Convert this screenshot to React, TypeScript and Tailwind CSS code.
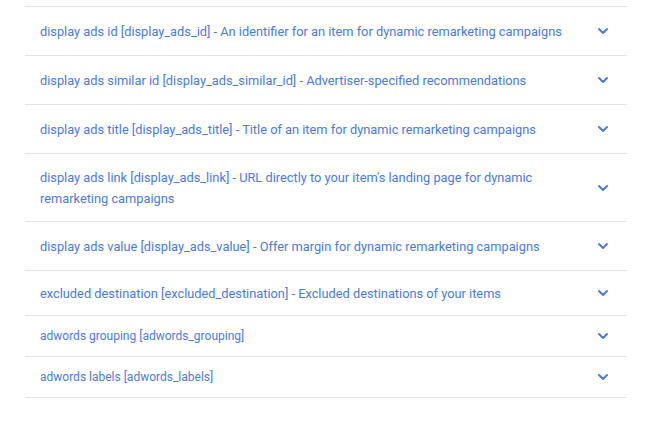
import { useState } from 'react';

type Row = {
  label: string;
  pad: string;
  size: string;
};

const ROWS: Row[] = [
  {
    label: 'display ads id [display_ads_id] - An identifier for an item for dynamic remarketing campaigns',
    pad: 'py-[13.5px] leading-[21px]',
    size: 'text-[12.8px]',
  },
  {
    label: 'display ads similar id [display_ads_similar_id] - Advertiser-specified recommendations',
    pad: 'py-[13.5px] leading-[21px]',
    size: 'text-[12.8px]',
  },
  {
    label: 'display ads title [display_ads_title] - Title of an item for dynamic remarketing campaigns',
    pad: 'py-[13.5px] leading-[21px]',
    size: 'text-[12.8px]',
  },
  {
    label:
      "display ads link [display_ads_link] - URL directly to your item's landing page for dynamic remarketing campaigns",
    pad: 'py-[12.5px] leading-[21px]',
    size: 'text-[12.8px]',
  },
  {
    label: 'display ads value [display_ads_value] - Offer margin for dynamic remarketing campaigns',
    pad: 'py-[13.5px] leading-[21px]',
    size: 'text-[12.8px]',
  },
  {
    label: 'excluded destination [excluded_destination] - Excluded destinations of your items',
    pad: 'py-[11.5px] leading-[21px]',
    size: 'text-[12.8px]',
  },
  {
    label: 'adwords grouping [adwords_grouping]',
    pad: 'py-[10px] leading-[20px]',
    size: 'text-[12px]',
  },
  {
    label: 'adwords labels [adwords_labels]',
    pad: 'py-[10px] leading-[20px]',
    size: 'text-[12px]',
  },
];

const Chevron = ({ open }: { open: boolean }) => (
  <svg
    width="12"
    height="8"
    viewBox="0 0 12 8"
    className={open ? 'rotate-180' : ''}
    fill="none"
    stroke="#4a7bdc"
    strokeWidth="2"
    strokeLinecap="round"
    strokeLinejoin="round"
  >
    <path d="M2 2l4 4 4-4" />
  </svg>
);

function App() {
  const [openIndex, setOpenIndex] = useState<number | null>(null);

  return (
    <div
      className="min-h-[428px] w-[670px] bg-white pt-[6px]"
      style={{ fontFamily: 'Roboto, "Noto Sans", Arial, sans-serif' }}
    >
      <ul className="ml-[25px] w-[602px] border-t border-[#e4e4e4]">
        {ROWS.map((row, i) => (
          <li key={row.label} className="border-b border-[#e4e4e4]">
            <button
              type="button"
              onClick={() => setOpenIndex(openIndex === i ? null : i)}
              className={`flex w-full items-center justify-between pl-[15px] pr-[18px] text-left ${row.pad}`}
            >
              <span className={`max-w-[550px] text-[#4a7bdc] ${row.size}`}>{row.label}</span>
              <Chevron open={openIndex === i} />
            </button>
          </li>
        ))}
      </ul>
    </div>
  );
}

export default App;
